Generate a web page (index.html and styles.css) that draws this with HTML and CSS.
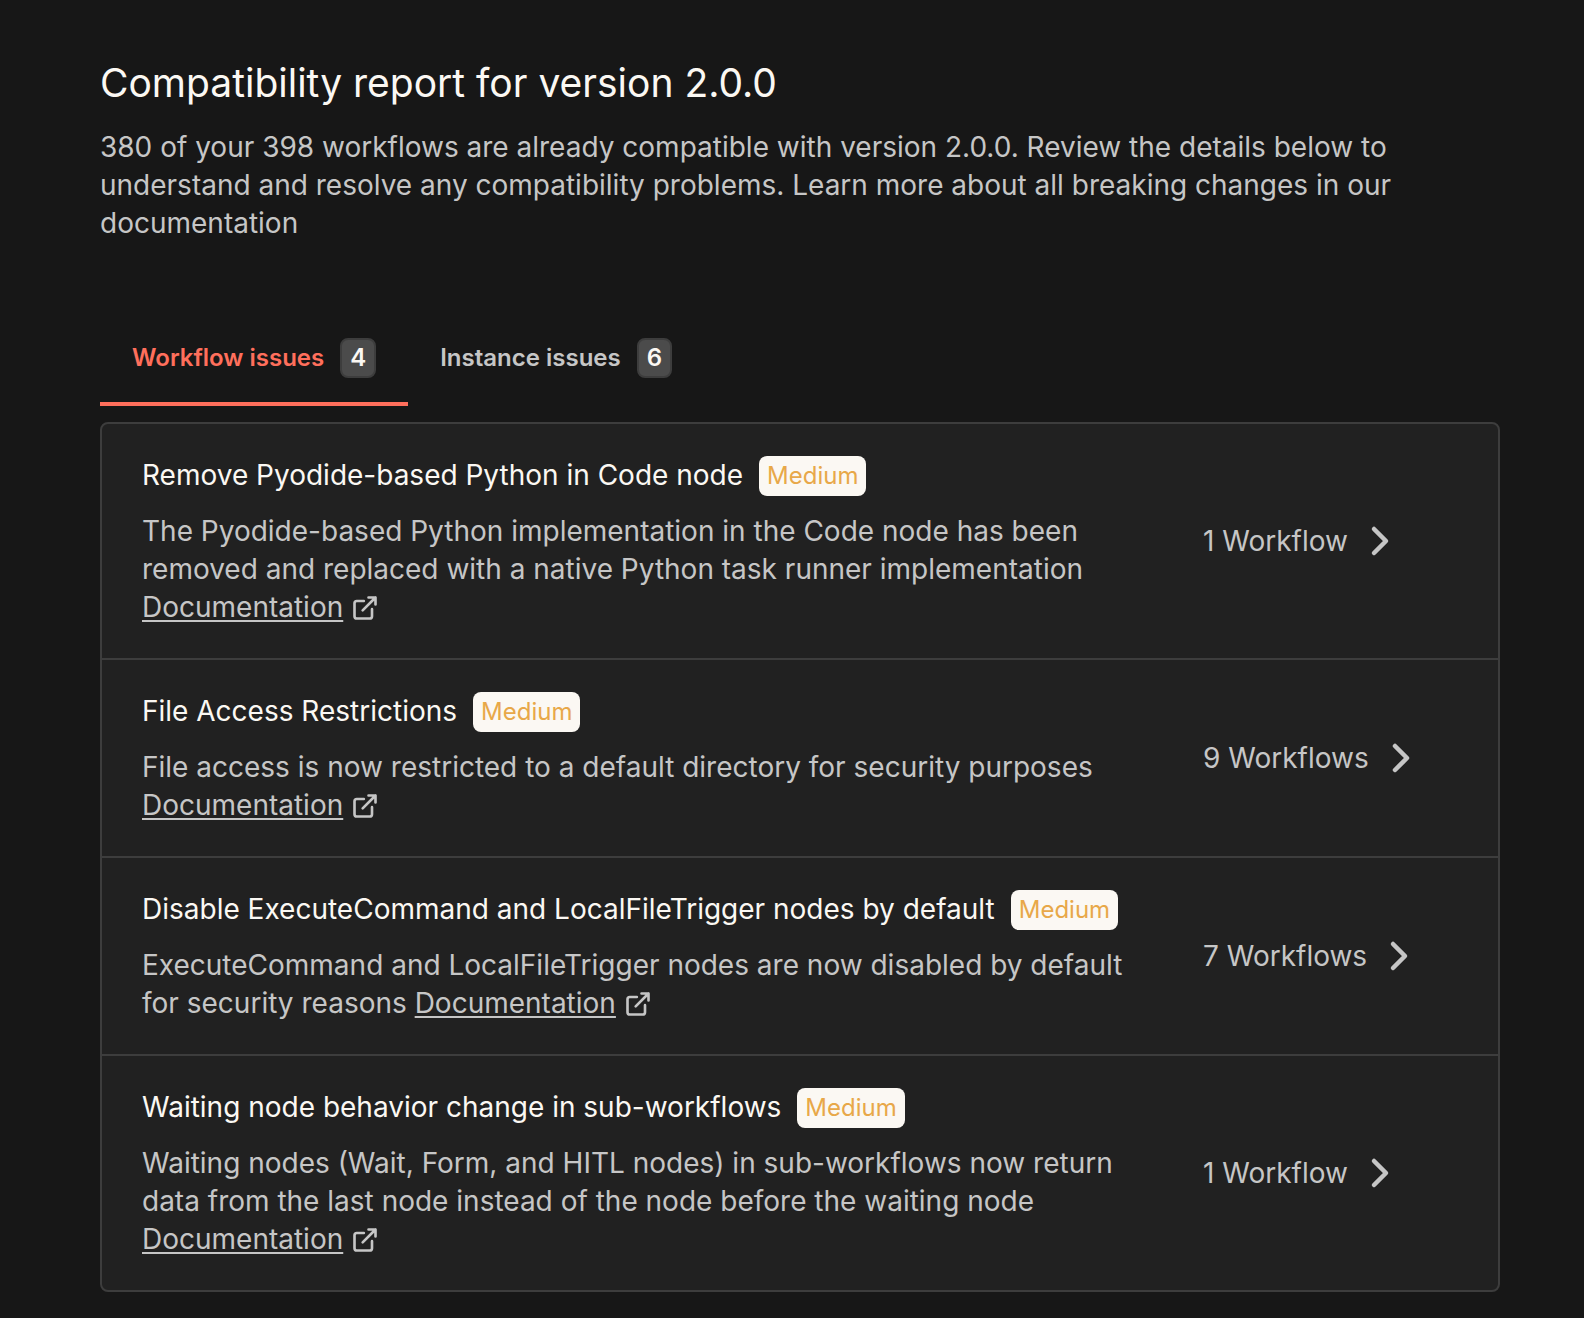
FILE: index.html
```html
<!DOCTYPE html>
<html lang="en">
<head>
    <meta charset="UTF-8">
    <meta name="viewport" content="width=device-width, initial-scale=1.0">
    <title>Compatibility report</title>
    <link rel="stylesheet" href="styles.css">
</head>
<body>
    <svg class="sprite" aria-hidden="true">
        <symbol id="icon-external" viewBox="0 0 24 24">
            <path d="M15 3h6v6M10 14 21 3M18 13v6a2 2 0 0 1-2 2H5a2 2 0 0 1-2-2V8a2 2 0 0 1 2-2h6"/>
        </symbol>
        <symbol id="icon-chevron" viewBox="0 0 24 24">
            <path d="m9 18 6-6-6-6"/>
        </symbol>
    </svg>

    <main class="report">
        <header class="report-header">
            <h1>Compatibility report for version 2.0.0</h1>
            <p>380 of your 398 workflows are already compatible with version 2.0.0. Review the details below to understand and resolve any compatibility problems. Learn more about all breaking changes in our <a href="#">documentation</a></p>
        </header>

        <div class="tabs" role="tablist">
            <button type="button" class="tab active" role="tab" aria-selected="true">Workflow issues <span class="count">4</span></button>
            <button type="button" class="tab" role="tab" aria-selected="false">Instance issues <span class="count">6</span></button>
        </div>

        <ul class="issues">
            <li class="issue">
                <div class="issue-info">
                    <div class="issue-title">
                        <h2>Remove Pyodide-based Python in Code node</h2>
                        <span class="severity">Medium</span>
                    </div>
                    <p>The Pyodide-based Python implementation in the Code node has been removed and replaced with a native Python task runner implementation <a class="doc-link" href="#"><span>Documentation</span><svg class="icon-external"><use href="#icon-external"/></svg></a></p>
                </div>
                <a class="issue-count" href="#">1 Workflow <svg class="icon-chevron"><use href="#icon-chevron"/></svg></a>
            </li>
            <li class="issue">
                <div class="issue-info">
                    <div class="issue-title">
                        <h2>File Access Restrictions</h2>
                        <span class="severity">Medium</span>
                    </div>
                    <p>File access is now restricted to a default directory for security purposes <a class="doc-link" href="#"><span>Documentation</span><svg class="icon-external"><use href="#icon-external"/></svg></a></p>
                </div>
                <a class="issue-count" href="#">9 Workflows <svg class="icon-chevron"><use href="#icon-chevron"/></svg></a>
            </li>
            <li class="issue">
                <div class="issue-info">
                    <div class="issue-title">
                        <h2>Disable ExecuteCommand and LocalFileTrigger nodes by default</h2>
                        <span class="severity">Medium</span>
                    </div>
                    <p>ExecuteCommand and LocalFileTrigger nodes are now disabled by default for security reasons <a class="doc-link" href="#"><span>Documentation</span><svg class="icon-external"><use href="#icon-external"/></svg></a></p>
                </div>
                <a class="issue-count" href="#">7 Workflows <svg class="icon-chevron"><use href="#icon-chevron"/></svg></a>
            </li>
            <li class="issue">
                <div class="issue-info">
                    <div class="issue-title">
                        <h2>Waiting node behavior change in sub-workflows</h2>
                        <span class="severity">Medium</span>
                    </div>
                    <p>Waiting nodes (Wait, Form, and HITL nodes) in sub-workflows now return data from the last node instead of the node before the waiting node <a class="doc-link" href="#"><span>Documentation</span><svg class="icon-external"><use href="#icon-external"/></svg></a></p>
                </div>
                <a class="issue-count" href="#">1 Workflow <svg class="icon-chevron"><use href="#icon-chevron"/></svg></a>
            </li>
        </ul>
    </main>
</body>
</html>
```

FILE: styles.css
```css
* {
    margin: 0;
    padding: 0;
    box-sizing: border-box;
}

body {
    font-family: Inter, 'Liberation Sans', sans-serif;
    font-size: 28px;
    line-height: 38px;
    background: #171717;
    color: #c6c6c6;
}

a {
    color: inherit;
    text-decoration: none;
}

h1, h2 {
    font-weight: 400;
    color: #fbf8f3;
}

h1 {
    font-size: 39px;
    line-height: 50px;
    margin-bottom: 20px;
}

h2 {
    font-size: 28px;
}

.sprite {
    display: none;
}

.report {
    padding: 58px 84px 28px 100px;
}

.report-header {
    margin-bottom: 72px;
}

.tabs {
    display: flex;
    margin-bottom: 16px;
}

.tab {
    display: flex;
    align-items: center;
    gap: 16px;
    padding: 24px 32px;
    border: none;
    border-bottom: 4px solid transparent;
    background: none;
    color: #c6c6c6;
    font-family: inherit;
    font-size: 24px;
    font-weight: 600;
    line-height: 40px;
    cursor: pointer;
}

.tab.active {
    color: #ff6f5c;
    border-bottom-color: #ff6f5c;
}

.count {
    padding: 0 8px;
    border: 2px solid #3d3d3d;
    border-radius: 8px;
    background: #4b4b4b;
    color: #fbf8f3;
    line-height: 36px;
}

.issues {
    list-style: none;
    background: #212121;
    border: 2px solid #3d3d3d;
    border-radius: 8px;
}

.issue {
    display: grid;
    grid-template-columns: 1fr 255px;
    gap: 64px;
    align-items: center;
    padding: 32px 40px;
}

.issue + .issue {
    border-top: 2px solid #3d3d3d;
}

.issue-title {
    display: flex;
    align-items: flex-start;
    gap: 16px;
    margin-bottom: 16px;
}

.severity {
    padding: 0 8px;
    border-radius: 8px;
    background: #fbf8f3;
    color: #e8a849;
    font-size: 24px;
    line-height: 40px;
}

.doc-link {
    white-space: nowrap;
}

.doc-link span {
    text-decoration: underline;
    text-decoration-thickness: 2px;
    text-underline-offset: 3px;
}

.icon-external,
.icon-chevron {
    fill: none;
    stroke: currentColor;
    stroke-width: 2.25;
    stroke-linecap: round;
    stroke-linejoin: round;
}

.icon-external {
    width: 28px;
    height: 28px;
    margin-left: 8px;
    vertical-align: -5px;
}

.issue-count {
    display: flex;
    align-items: center;
    gap: 8px;
    white-space: nowrap;
}

.icon-chevron {
    width: 48px;
    height: 48px;
}
```
